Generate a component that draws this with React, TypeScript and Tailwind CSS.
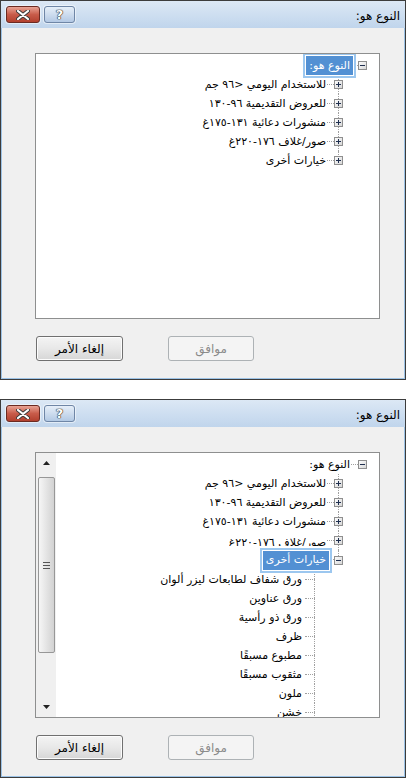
import React from 'react';

type Row = {
  level: 0 | 1 | 2;
  label: string;
  box?: 'plus' | 'minus';
  selected?: boolean;
  line?: 'full' | 'half';
  clipped?: boolean;
  tall?: boolean;
};

// tree geometry per level (distance from the right edge of the tree)
const indent = ['w-[12px]', 'w-[36px]', 'w-[60px]'];
const lineAt = ['right-[16px]', 'right-[40px]', 'right-[64px]'];
const stubAt = ['right-[21px] w-[7px]', 'right-[45px] w-[7px]', 'right-[64px] w-[10px]'];

const firstTree: Row[] = [
  { level: 0, label: 'النوع هو:', box: 'minus', selected: true },
  { level: 1, label: 'للاستخدام اليومي <٩٦ جم', box: 'plus', line: 'full' },
  { level: 1, label: 'للعروض التقديمية ٩٦-١٣٠', box: 'plus', line: 'full' },
  { level: 1, label: 'منشورات دعائية ١٣١-١٧٥غ', box: 'plus', line: 'full' },
  { level: 1, label: 'صور/غلاف ١٧٦-٢٢٠غ', box: 'plus', line: 'full' },
  { level: 1, label: 'خيارات أخرى', box: 'plus', line: 'half' },
];

const secondTree: Row[] = [
  { level: 0, label: 'النوع هو:', box: 'minus' },
  { level: 1, label: 'للاستخدام اليومي <٩٦ جم', box: 'plus', line: 'full' },
  { level: 1, label: 'للعروض التقديمية ٩٦-١٣٠', box: 'plus', line: 'full' },
  { level: 1, label: 'منشورات دعائية ١٣١-١٧٥غ', box: 'plus', line: 'full' },
  { level: 1, label: 'صور/غلاف ١٧٦-٢٢٠غ', box: 'plus', line: 'full', clipped: true },
  { level: 1, label: 'خيارات أخرى', box: 'minus', line: 'half', selected: true, tall: true },
  { level: 2, label: 'ورق شفاف لطابعات ليزر ألوان', line: 'full' },
  { level: 2, label: 'ورق عناوين', line: 'full' },
  { level: 2, label: 'ورق ذو رأسية', line: 'full' },
  { level: 2, label: 'ظرف', line: 'full' },
  { level: 2, label: 'مطبوع مسبقًا', line: 'full' },
  { level: 2, label: 'مثقوب مسبقًا', line: 'full' },
  { level: 2, label: 'ملون', line: 'full' },
  { level: 2, label: 'خشن', line: 'full' },
];

const Expander: React.FC<{ kind: 'plus' | 'minus' }> = ({ kind }) => (
  <svg width="9" height="9" viewBox="0 0 9 9" className="block">
    <defs>
      <linearGradient id="exp" x1="0" y1="0" x2="1" y2="1">
        <stop offset="0" stopColor="#ffffff" />
        <stop offset="1" stopColor="#d4d4d4" />
      </linearGradient>
    </defs>
    <rect x="0.5" y="0.5" width="8" height="8" fill="url(#exp)" stroke="#8f8f8f" />
    <rect x="2" y="4" width="5" height="1" fill="#1f2f4f" />
    {kind === 'plus' && <rect x="4" y="2" width="1" height="5" fill="#1f2f4f" />}
  </svg>
);

const TreeRow: React.FC<{ row: Row }> = ({ row }) => (
  <div className={`relative flex items-center ${row.tall ? 'h-[20px]' : 'h-[19px]'}`}>
    {row.line && (
      <div
        className={`absolute top-0 ${row.line === 'full' ? 'bottom-0' : 'h-[10px]'} ${lineAt[row.level]} border-l border-dotted border-[#a0a0a0]`}
      />
    )}
    <div className={`absolute top-[9px] ${stubAt[row.level]} border-t border-dotted border-[#a0a0a0]`} />
    <div className={`shrink-0 ${indent[row.level]}`} />
    <div className="relative z-10 h-[9px] w-[9px] shrink-0">{row.box && <Expander kind={row.box} />}</div>
    <div className="w-[2px] shrink-0" />
    <div
      className={`relative z-10 flex h-[25px] shrink-0 items-center whitespace-nowrap border-2 px-[4px] ${
        row.selected
          ? 'border-[#9cc7ef] bg-[#5290d3] text-white shadow-[inset_0_0_0_1px_#ffffff]'
          : 'border-transparent text-black'
      }`}
    >
      {row.clipped ? (
        <span className="inline-block h-[10px] overflow-hidden leading-[14px]">{row.label}</span>
      ) : (
        <span className="leading-[14px]">{row.label}</span>
      )}
    </div>
  </div>
);

const Scrollbar: React.FC = () => (
  <div className="flex w-[20px] shrink-0 flex-col bg-[#f0f0f0]">
    <div className="flex h-[20px] items-center justify-center">
      <svg width="7" height="4" viewBox="0 0 7 4">
        <polygon points="0,4 7,4 3.5,0" fill="#222" />
      </svg>
    </div>
    <div className="ml-[2px] mt-[4px] flex h-[176px] w-[17px] items-center justify-center rounded-[2px] border border-[#979797] bg-gradient-to-r from-[#f6f6f6] to-[#d2d2d2]">
      <div className="flex flex-col gap-[2px]">
        <div className="h-px w-[7px] bg-[#555]" />
        <div className="h-px w-[7px] bg-[#555]" />
        <div className="h-px w-[7px] bg-[#555]" />
      </div>
    </div>
    <div className="flex-1" />
    <div className="flex h-[20px] items-center justify-center">
      <svg width="7" height="4" viewBox="0 0 7 4">
        <polygon points="0,0 7,0 3.5,4" fill="#222" />
      </svg>
    </div>
  </div>
);

const Dialog: React.FC<{ rows: Row[]; scroll?: boolean; clientH: string }> = ({ rows, scroll, clientH }) => (
  <div className="w-[406px] border border-[#3c3c3c] bg-[#f0f0f0]">
    {/* title bar */}
    <div className="flex h-[27px] items-start bg-gradient-to-b from-[#dce8f5] to-[#c0d5ec] pl-[5px] pr-[5px] pt-[5px]">
      <div className="flex h-[17px] w-[34px] items-center justify-center rounded-[3px] border border-[#6b2a22] bg-gradient-to-b from-[#e8a395] via-[#c85c4a] to-[#b2402e] shadow-[0_0_0_1px_rgba(255,255,255,0.5)]">
        <svg width="14" height="10" viewBox="0 0 14 10">
          <path d="M2 1 L12 9 M12 1 L2 9" stroke="#3a3a3a" strokeWidth="4" strokeLinecap="round" />
          <path d="M2 1 L12 9 M12 1 L2 9" stroke="#ffffff" strokeWidth="2.2" strokeLinecap="round" />
        </svg>
      </div>
      <div className="ml-[4px] flex h-[17px] w-[31px] items-center justify-center rounded-[3px] border border-[#6f86a6] bg-gradient-to-b from-[#e6eff9] via-[#cddcee] to-[#b3c9e4] shadow-[0_0_0_1px_rgba(255,255,255,0.5)]">
        <span className="text-[13px] font-bold leading-none text-white [text-shadow:0_0_1px_#222,0_0_1px_#222,0_0_1px_#222]">?</span>
      </div>
      <div dir="rtl" className="ml-auto pt-[3px] text-[12px] leading-[14px] text-black">
        النوع هو:
      </div>
    </div>
    {/* client area */}
    <div className={`border-x border-b border-[#9dc3e6] ${clientH}`}>
      <div className="pl-[33px] pt-[25px]">
        <div className="flex h-[266px] w-[345px] overflow-hidden border border-[#8e8f8f] bg-white">
          {scroll && <Scrollbar />}
          <div dir="rtl" className="flex-1 overflow-hidden pt-[2px] text-[11px]">
            {rows.map((r, i) => (
              <TreeRow key={i} row={r} />
            ))}
          </div>
        </div>
        <div className="mt-[17px] flex gap-[45px] pl-[1px]">
          <button className="flex h-[25px] w-[87px] items-center justify-center rounded-[3px] border border-[#707070] bg-gradient-to-b from-[#f4f4f4] via-[#e8e8e8] to-[#d6d6d6] text-[12px] text-black shadow-[inset_0_0_0_1px_#fcfcfc]">
            إلغاء الأمر
          </button>
          <button className="flex h-[25px] w-[86px] items-center justify-center rounded-[3px] border border-[#adb2b5] bg-[#f4f4f4] text-[12px] text-[#8a8a8a]">
            موافق
          </button>
        </div>
      </div>
    </div>
  </div>
);

export default function App() {
  return (
    <div className="h-[778px] w-[408px] overflow-hidden bg-white font-['DejaVu_Sans',sans-serif]">
      <Dialog rows={firstTree} clientH="h-[351px]" />
      <div className="mt-[19px]">
        <Dialog rows={secondTree} scroll clientH="h-[350px]" />
      </div>
    </div>
  );
}
